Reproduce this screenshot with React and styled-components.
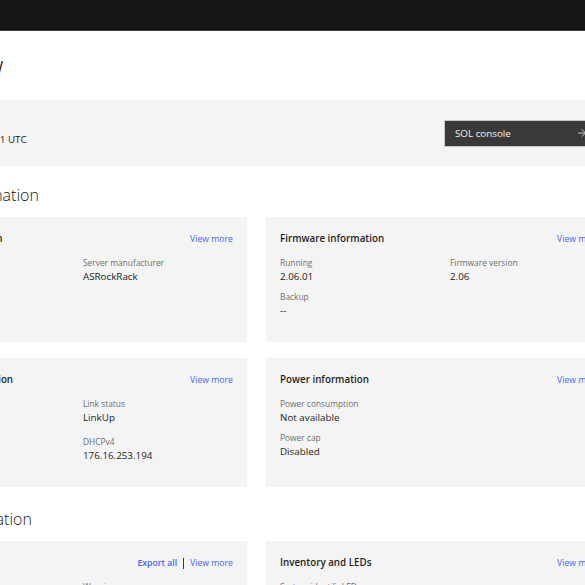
import React from 'react';
import styled, { createGlobalStyle } from 'styled-components';
import { ArrowRight } from 'lucide-react';

const GlobalStyle = createGlobalStyle`
  * { box-sizing: border-box; }
  html, body {
    margin: 0;
    padding: 0;
    background: #ffffff;
  }
  body {
    font-family: "Open Sans", "Noto Sans", sans-serif;
    color: #161616;
    overflow: hidden;
  }
`;

const Viewport = styled.div`
  width: 585px;
  height: 585px;
  overflow: hidden;
`;

const TopBar = styled.header`
  height: 31px;
  background: #161616;
  border-bottom: 1px solid #3d3d3d;
`;

// the page is wider than the window; it is scrolled a little to the right
const Content = styled.main`
  width: 715px;
  margin-left: -101px;
`;

const PageTitle = styled.h1`
  margin: 19px 0 18px;
  font-size: 27px;
  font-weight: 300;
  line-height: 32px;
  letter-spacing: -1px;
  color: #161616;
`;

const QuickLinks = styled.section`
  height: 66px;
  padding: 0 14px;
  background: #f4f4f4;
  display: flex;
  align-items: center;
  justify-content: space-between;
`;

const QuickItem = styled.dl`
  margin: 0;
  display: flex;
  flex-direction: column;
`;

const Label = styled.dt`
  margin: 0;
  font-size: 8.4px;
  line-height: 13px;
  color: #6f6f6f;
`;

const Value = styled.dd`
  margin: 0;
  font-size: 9.8px;
  line-height: 15px;
  color: #222222;
`;

const ConsoleButton = styled.button`
  width: 156px;
  height: 27px;
  padding: 0 11px 0 10px;
  display: flex;
  align-items: center;
  justify-content: space-between;
  background: #393939;
  color: #f4f4f4;
  border: 1px solid #c6c6c6;
  font-family: "Open Sans", sans-serif;
  font-size: 9.8px;
  cursor: pointer;
`;

const SectionTitle = styled.h2`
  margin: ${(p) => (p.$first ? '19px 0 12px' : '22px 0 12px')};
  font-size: 16px;
  font-weight: 300;
  line-height: 20px;
  color: #161616;
`;

const CardGrid = styled.div`
  display: grid;
  grid-template-columns: 348px 348px;
  column-gap: 19px;
  row-gap: 16px;
`;

const Card = styled.div`
  background: #f4f4f4;
  padding: 15px 14px 24px;
`;

const CardHead = styled.div`
  height: 14px;
  display: flex;
  align-items: center;
  justify-content: space-between;
`;

const CardTitle = styled.h3`
  margin: 0;
  font-size: 9.8px;
  font-weight: 600;
  line-height: 14px;
  color: #1f1f1f;
`;

const Links = styled.div`
  display: flex;
  align-items: center;
  gap: 6px;
`;

const CardLink = styled.a`
  font-size: 8.7px;
  font-weight: ${(p) => (p.$strong ? 600 : 400)};
  line-height: 14px;
  color: #4966f0;
  text-decoration: none;
`;

const Divider = styled.span`
  width: 1px;
  height: 11px;
  background: #393939;
`;

const Details = styled.div`
  margin-top: 10px;
  display: grid;
  grid-template-columns: 1fr 1fr;
  column-gap: 20px;
  row-gap: ${(p) => p.$rowGap}px;
`;

const cards = {
  system: [
    {
      title: 'Server information',
      rows: [
        [['Model', 'X570D4U'], ['Server manufacturer', 'ASRockRack']],
        [['Serial number', '--'], null],
      ],
    },
    {
      title: 'Firmware information',
      rows: [
        [['Running', '2.06.01'], ['Firmware version', '2.06']],
        [['Backup', '--'], null],
      ],
    },
    {
      title: 'Network information',
      gap: 10,
      rows: [
        [['Hostname', 'asrockrack'], ['Link status', 'LinkUp']],
        [['IPv4', '176.16.253.194'], ['DHCPv4', '176.16.253.194']],
      ],
    },
    {
      title: 'Power information',
      rows: [
        [['Power consumption', 'Not available'], null],
        [['Power cap', 'Disabled'], null],
      ],
    },
  ],
  status: [
    {
      title: 'Event logs',
      exportAll: true,
      rows: [[['Critical', '0'], ['Warning', '0']]],
    },
    {
      title: 'Inventory and LEDs',
      rows: [[['System identify LED', 'Off'], null]],
    },
  ],
};

function InfoCard({ card }) {
  return (
    <Card>
      <CardHead>
        <CardTitle>{card.title}</CardTitle>
        <Links>
          {card.exportAll && (
            <>
              <CardLink href="#" $strong>Export all</CardLink>
              <Divider />
            </>
          )}
          <CardLink href="#">View more</CardLink>
        </Links>
      </CardHead>
      <Details $rowGap={card.gap || 6}>
        {card.rows.flat().map((item, i) =>
          item ? (
            <QuickItem key={i}>
              <Label>{item[0]}</Label>
              <Value>{item[1]}</Value>
            </QuickItem>
          ) : (
            <div key={i} />
          )
        )}
      </Details>
    </Card>
  );
}

export default function App() {
  return (
    <Viewport>
      <GlobalStyle />
      <TopBar />
      <Content>
        <PageTitle>Overview</PageTitle>
        <QuickLinks>
          <QuickItem>
            <Label>BMC time</Label>
            <Value>2024-03-04 10:25:31 UTC</Value>
          </QuickItem>
          <ConsoleButton>
            SOL console
            <ArrowRight size={12} strokeWidth={1.5} />
          </ConsoleButton>
        </QuickLinks>

        <SectionTitle $first>System information</SectionTitle>
        <CardGrid>
          {cards.system.map((c) => (
            <InfoCard key={c.title} card={c} />
          ))}
        </CardGrid>

        <SectionTitle>Status information</SectionTitle>
        <CardGrid>
          {cards.status.map((c) => (
            <InfoCard key={c.title} card={c} />
          ))}
        </CardGrid>
      </Content>
    </Viewport>
  );
}
